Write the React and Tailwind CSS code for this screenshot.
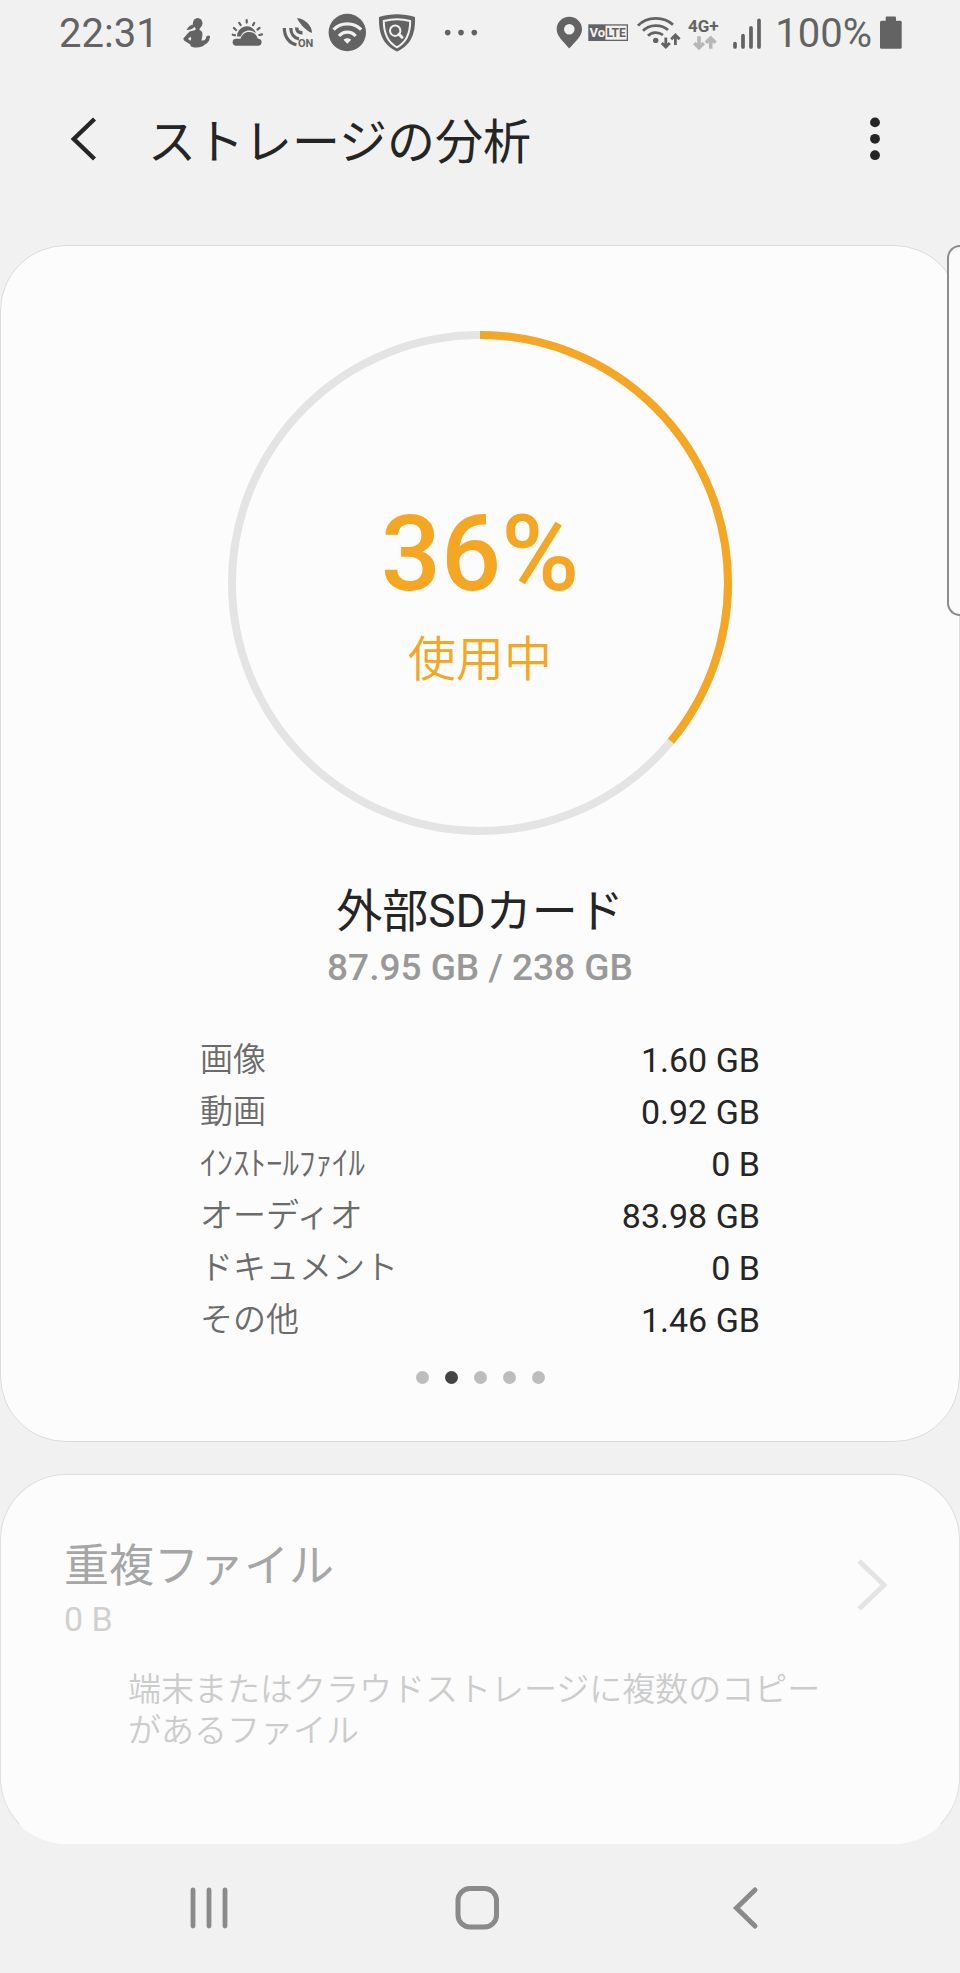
import React, { useState } from "react";

const USED_PERCENT = 36;

const CATEGORIES = [
  { label: "画像", size: "1.60 GB" },
  { label: "動画", size: "0.92 GB" },
  { label: "ｲﾝｽﾄｰﾙﾌｧｲﾙ", size: "0 B" },
  { label: "オーディオ", size: "83.98 GB" },
  { label: "ドキュメント", size: "0 B" },
  { label: "その他", size: "1.46 GB" },
];

const PAGES = ["内部ストレージ", "外部SDカード", "クラウド 1", "クラウド 2", "クラウド 3"];

// Status bar, left side
const NotificationIcons = () => (
  <>
    <div className="flex gap-[10px] ml-[18px]">
      {/* Fitness */}
      <svg width="40" height="40" viewBox="0 0 40 40" fill="currentColor">
        <ellipse cx="20.7" cy="10.3" rx="4.8" ry="5.4" />
        <path d="M17 11.5 C14 11.5 11 13.5 9.5 17 C12.5 17.2 15.5 16 17.5 14 Z" />
        <path
          fillRule="evenodd"
          d="M18.5 13 L23 14 L22.5 17 C25.5 17.8 26 21 25 24.5 L24.5 27.5 C27.5 28 29 26.5 29.3 23.5 L31 22.5 L33 23 C32.8 28 30.5 30.5 27.5 31.8 C25 35 17 35.5 13.5 33 L13.3 31.5 L7 27.5 L6.3 25.5 L12.5 18.5 L18.5 17 Z M13.6 23.6 L11 26 L13.4 27.8 L14.2 26 Z"
        />
      </svg>

      {/* Weather */}
      <svg width="40" height="40" viewBox="0 0 40 40" fill="none" stroke="currentColor" strokeLinecap="round">
        <g strokeWidth="2.2">
          <path d="M5.7 21.7 L8 22.2 M6.9 15 L9 17 M12.2 9.9 L13.6 12 M19.7 7 L19.7 9.6 M27.2 9.9 L26 12.2 M32.5 14.9 L30.5 16.6 M35 21.4 L32.4 22" />
        </g>
        <path d="M10 23.5 A9.7 9.7 0 0 1 29 20.3 C26 17 20.5 16.4 17 19 C15.2 20.3 14.2 22 13.6 23.6 Z" fill="currentColor" stroke="none" />
        <path
          d="M8.5 25.8 H13.5 C15 20.8 18.5 19 22.3 19 C26.5 19 29.5 21.5 30.8 25.8 H31.7 A3.5 3.5 0 0 1 31.7 32.7 H8.5 A3.5 3.5 0 0 1 8.5 25.8 Z"
          fill="currentColor"
          stroke="none"
        />
      </svg>

      {/* Broadcast */}
      <svg width="40" height="40" viewBox="0 0 40 40" fill="none" stroke="currentColor" strokeWidth="3.2">
        <path d="M20 5.2 C26 4.6 35.3 12 35 20 C29 17.5 23.5 12 20 5.2 Z" fill="currentColor" stroke="none" />
        <path d="M7.3 15 C7.3 24 12.5 30.5 19.5 31.8" />
        <path d="M13.8 15 C13.8 20.5 17 25 22 26" />
        <path d="M19.8 14.5 C19.5 18 21.5 20 25.5 19.8" strokeWidth="3.6" />
        <text x="21" y="34.2" fontSize="11" fontWeight="700" fill="currentColor" stroke="none">
          ON
        </text>
      </svg>

      {/* Wi-Fi badge */}
      <svg width="40" height="40" viewBox="0 0 40 40" fill="none" stroke="#f1f1f1" strokeWidth="3.2">
        <circle cx="20.3" cy="19.5" r="18.7" fill="currentColor" stroke="none" />
        <path d="M6.5 16.6 C14 9 26.5 9 34.2 16.6" />
        <path d="M12 23 C16.5 17.8 24 17.8 28.7 23" />
        <path d="M16.5 26.8 C18.8 24.8 21.8 24.8 24.2 26.8 L20.3 30.8 Z" fill="#f1f1f1" stroke="none" />
      </svg>

      {/* Security shield */}
      <svg width="40" height="40" viewBox="0 0 40 40" fill="currentColor">
        <path d="M2 4 C14 0.4 26 0.4 38 4 C38.5 20 34.5 32 20 38.4 C5.5 32 1.5 20 2 4 Z" />
        <path
          d="M6.8 8 C15.5 5.8 24.5 5.8 33.2 8 C33.2 20.5 29 29.5 20 34.3 C11 29.5 6.8 20.5 6.8 8 Z"
          fill="none"
          stroke="#f1f1f1"
          strokeWidth="2"
        />
        <circle cx="18.2" cy="17.7" r="5.2" fill="none" stroke="#f1f1f1" strokeWidth="2" />
        <path d="M22 21.3 L25 24.3" stroke="#f1f1f1" strokeWidth="3" strokeLinecap="round" />
      </svg>
    </div>

    {/* More notifications */}
    <svg className="ml-6" width="40" height="40" viewBox="0 0 40 40" fill="currentColor">
      <circle cx="6.7" cy="19.6" r="2.8" />
      <circle cx="20" cy="19.6" r="2.8" />
      <circle cx="33.3" cy="19.6" r="2.8" />
    </svg>
  </>
);

// Status bar, right side
const SystemIcons = () => (
  <>
    {/* Location */}
    <svg width="28" height="40" viewBox="0 0 28 40" fill="currentColor">
      <path
        fillRule="evenodd"
        d="M15.3 3.7 C8.3 3.7 2.7 9.2 2.7 16.2 C2.7 23 8.5 27.5 15.3 35.4 C22.2 27.5 28 23 28 16.2 C28 9.2 22.3 3.7 15.3 3.7 Z M15.3 11 A5.3 5.3 0 1 1 15.3 21.6 A5.3 5.3 0 1 1 15.3 11 Z"
      />
    </svg>

    {/* VoLTE */}
    <svg width="42" height="40" viewBox="0 0 42 40">
      <rect x="0.3" y="11.3" width="39.7" height="16.7" fill="currentColor" />
      <rect x="17.5" y="12.6" width="21.2" height="14.1" fill="#f1f1f1" />
      <text x="1.5" y="24" fontSize="13" fontWeight="700" fill="#f1f1f1">
        Vo
      </text>
      <text x="18.4" y="24" fontSize="12" fontWeight="700" fill="currentColor">
        LTE
      </text>
    </svg>

    {/* Wi-Fi with traffic arrows */}
    <svg width="46" height="40" viewBox="0 0 46 40" fill="none" stroke="currentColor" strokeWidth="2.8">
      <path d="M2 12.6 C11 3 28 3 37 11.8" />
      <path d="M7 17.8 C13.5 11 25.5 11 32 17" />
      <path d="M12 22.8 C16 18.6 22.5 18.6 27 22" />
      <circle cx="19.7" cy="27.4" r="2.7" fill="currentColor" stroke="none" />
      <path d="M29.8 24.6 V33.5 M25.8 30 L29.8 34 L33.8 30" />
      <path d="M39.4 32 V22.5 M35.2 26.2 L39.4 22 L43.6 26.2" />
    </svg>

    {/* Mobile network type */}
    <svg width="39" height="40" viewBox="0 0 39 40" fill="none">
      <text x="0" y="18.7" fontSize="17" fontWeight="700" fill="currentColor">
        4G+
      </text>
      <g stroke="#b7b7b7" strokeWidth="3.6">
        <path d="M11 23.3 V34.5 M6.3 30 L11 34.8 L15.8 30" />
        <path d="M22.7 35.8 V25 M17.9 29.8 L22.7 25 L27.5 29.8" />
      </g>
    </svg>

    {/* Signal strength */}
    <svg width="36" height="40" viewBox="0 0 36 40" stroke="currentColor" strokeWidth="3.7" strokeLinecap="round">
      <path d="M2 30.6 V34 M10 22.6 V34 M18 14.8 V34 M26 7.4 V34" />
    </svg>

    <span className="pt-0.5 text-[40px] leading-[48px]">100%</span>

    {/* Battery */}
    <svg width="24" height="40" viewBox="0 0 24 40" fill="currentColor">
      <rect x="2" y="7.7" width="21.7" height="28" rx="1.5" />
      <rect x="7.7" y="3.5" width="10.3" height="6" rx="1" />
    </svg>
  </>
);

const UsageRing = ({ percent }) => {
  const radius = 248;
  const length = 2 * Math.PI * radius;

  return (
    <div className="grid place-items-center">
      <svg className="col-start-1 row-start-1" width="504" height="504" viewBox="0 0 504 504" fill="none" strokeWidth="8">
        <circle cx="252" cy="252" r={radius} stroke="#e4e4e4" />
        <circle
          cx="252"
          cy="252"
          r={radius}
          stroke="#f5a623"
          strokeDasharray={`${(length * percent) / 100} ${length}`}
          transform="rotate(-90 252 252)"
        />
      </svg>
      <div className="col-start-1 row-start-1 flex flex-col items-center gap-7 pt-[18px] text-[#f5a623]">
        <span className="text-[106px] leading-[108px] font-medium">{percent}%</span>
        <span className="text-[48px] leading-[48px] font-[350]">使用中</span>
      </div>
    </div>
  );
};

const App = () => {
  const [page, setPage] = useState(1);

  return (
    <div
      lang="ja"
      className="relative min-h-screen overflow-x-hidden bg-[#f1f1f1] font-[Roboto,'Noto_Sans_CJK_JP',sans-serif] text-[#252525]"
    >
      {/* Status bar */}
      <div className="flex h-[66px] items-center justify-between pr-[58px] pl-[59px] text-[#636363]">
        <div className="flex items-center">
          <span className="pt-0.5 text-[40px] leading-[48px]">22:31</span>
          <NotificationIcons />
        </div>
        <div className="flex items-center gap-[6px]">
          <SystemIcons />
        </div>
      </div>

      {/* Title bar */}
      <header className="mb-[34px] flex h-[145px] items-center pr-[65px] pl-16">
        <button type="button" aria-label="戻る" className="mr-11">
          <svg width="40" height="48" viewBox="0 0 40 48" fill="none" stroke="currentColor" strokeWidth="4.4">
            <path d="M30.5 4 L9.8 24 L30.5 44" />
          </svg>
        </button>
        <h1 className="flex-1 pt-2 text-[48px] leading-[64px]">ストレージの分析</h1>
        <button type="button" aria-label="その他のオプション">
          <svg width="40" height="48" viewBox="0 0 40 48" fill="currentColor">
            <circle cx="20" cy="7.4" r="4.9" />
            <circle cx="20" cy="23.8" r="4.9" />
            <circle cx="20" cy="40.2" r="4.9" />
          </svg>
        </button>
      </header>

      <main className="flex flex-col gap-8">
        {/* Storage usage */}
        <section className="rounded-[66px] border border-[#dcdcdc] bg-[#fcfcfc] px-[199px] pt-[85px] pb-[57px]">
          <UsageRing percent={USED_PERCENT} />
          <h2 className="mt-[46px] text-center text-[46px] leading-[60px]">外部SDカード</h2>
          <p className="mt-[3px] text-center text-[37px] leading-[48px] font-medium text-[#999999]">
            87.95 GB / 238 GB
          </p>

          <table className="mt-[42px] w-full">
            <tbody>
              {CATEGORIES.map((category) => (
                <tr key={category.label} className="h-[52px]">
                  <th scope="row" className="p-0 text-left text-[33px] leading-[52px] font-[350] text-[#6b6b6b]">
                    {category.label}
                  </th>
                  <td className="p-0 text-right text-[34px] leading-[52px]">{category.size}</td>
                </tr>
              ))}
            </tbody>
          </table>

          <div className="mt-[25px] flex justify-center gap-4">
            {PAGES.map((name, index) => (
              <button
                key={name}
                type="button"
                aria-label={name}
                onClick={() => setPage(index)}
                className={`size-[13px] rounded-full ${index === page ? "bg-[#444444]" : "bg-[#bdbdbd]"}`}
              />
            ))}
          </div>
        </section>

        {/* Duplicate files, nothing to clean up */}
        <button
          type="button"
          disabled
          className="w-full rounded-[66px] border border-[#e0e0e0] border-b-[#fcfcfc] bg-[#fcfcfc] px-[63px] pt-16 pb-[92px] text-left"
        >
          <div className="flex items-center justify-between">
            <div>
              <h2 className="text-[45px] leading-[56px] text-[#a6a6a6]">重複ファイル</h2>
              <p className="mt-1 text-[34px] leading-[40px] text-[#d0d0d0]">0 B</p>
            </div>
            <svg width="40" height="60" viewBox="0 0 40 60" fill="none" stroke="#e4e4e4" strokeWidth="5">
              <path d="M3 2 L28 26 L3 50" />
            </svg>
          </div>
          <p className="mt-[30px] px-16 text-[33px] leading-[41px] font-[350] text-[#cccccc]">
            端末またはクラウドストレージに複数のコピーがあるファイル
          </p>
        </button>
      </main>

      {/* Edge panel handle */}
      <div className="absolute top-[245px] right-0 h-[371px] w-[13px] rounded-l-[13px] border-2 border-r-0 border-[#8c8c8c] bg-[#fbfbfb]" />

      {/* Navigation bar */}
      <nav className="flex h-32 items-center pr-[81px] pl-[75px] text-[#8a8a8a]">
        <button type="button" aria-label="最近使ったアプリ" className="flex flex-1 justify-center">
          <svg width="48" height="48" viewBox="0 0 48 48" fill="none" stroke="currentColor" strokeWidth="4.8" strokeLinecap="round">
            <path d="M8 6 V42 M24 6 V42 M40 6 V42" />
          </svg>
        </button>
        <button type="button" aria-label="ホーム" className="flex flex-1 justify-center">
          <svg width="48" height="48" viewBox="0 0 48 48" fill="none" stroke="currentColor" strokeWidth="5">
            <rect x="5" y="4.5" width="38.5" height="38.5" rx="12" />
          </svg>
        </button>
        <button type="button" aria-label="戻る" className="flex flex-1 justify-center">
          <svg width="48" height="48" viewBox="0 0 48 48" fill="none" stroke="currentColor" strokeWidth="5" strokeLinecap="round">
            <path d="M34 6 L15.5 24 L34 42" />
          </svg>
        </button>
      </nav>
    </div>
  );
};

export default App;
